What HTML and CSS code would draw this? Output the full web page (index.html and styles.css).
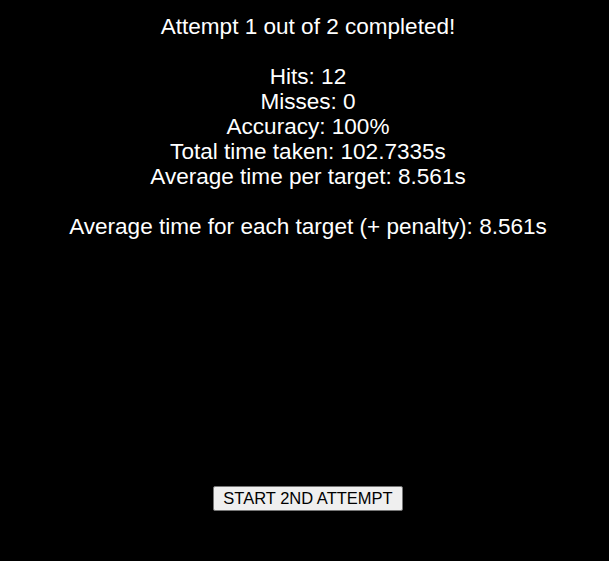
FILE: index.html
```html
<!DOCTYPE html>
<html>
<head>
<meta charset="utf-8">
<link rel="stylesheet" href="styles.css">
</head>
<body>
<main class="results">
  <div class="summary">
    Attempt 1 out of 2 completed!<br>
    <br>
    Hits: 12<br>
    Misses: 0<br>
    Accuracy: 100%<br>
    Total time taken: 102.7335s<br>
    Average time per target: 8.561s<br>
    <br>
    Average time for each target (+ penalty): 8.561s
  </div>
  <div class="actions">
    <button class="start-btn" type="button">START 2ND ATTEMPT</button>
  </div>
</main>
</body>
</html>
```

FILE: styles.css
```css
html, body {
  margin: 0;
  background: #000;
}

body {
  padding: 14px 0 0 7px;
  font-family: "Liberation Sans", Arial, sans-serif;
  color: #fff;
}

.results {
  display: flex;
  flex-direction: column;
  align-items: center;
  text-align: center;
}

.summary {
  font-size: 22.55px;
  line-height: 25px;
  white-space: nowrap;
}

.actions {
  margin-top: 247px;
}

.start-btn {
  font-family: "Liberation Sans", Arial, sans-serif;
  font-size: 16.5px;
  line-height: 17px;
  height: 25px;
  padding: 3px 9px;
  margin: 0;
  color: #000;
  background: #efefef;
  border: 1px solid #767676;
  border-radius: 2px;
}
```
